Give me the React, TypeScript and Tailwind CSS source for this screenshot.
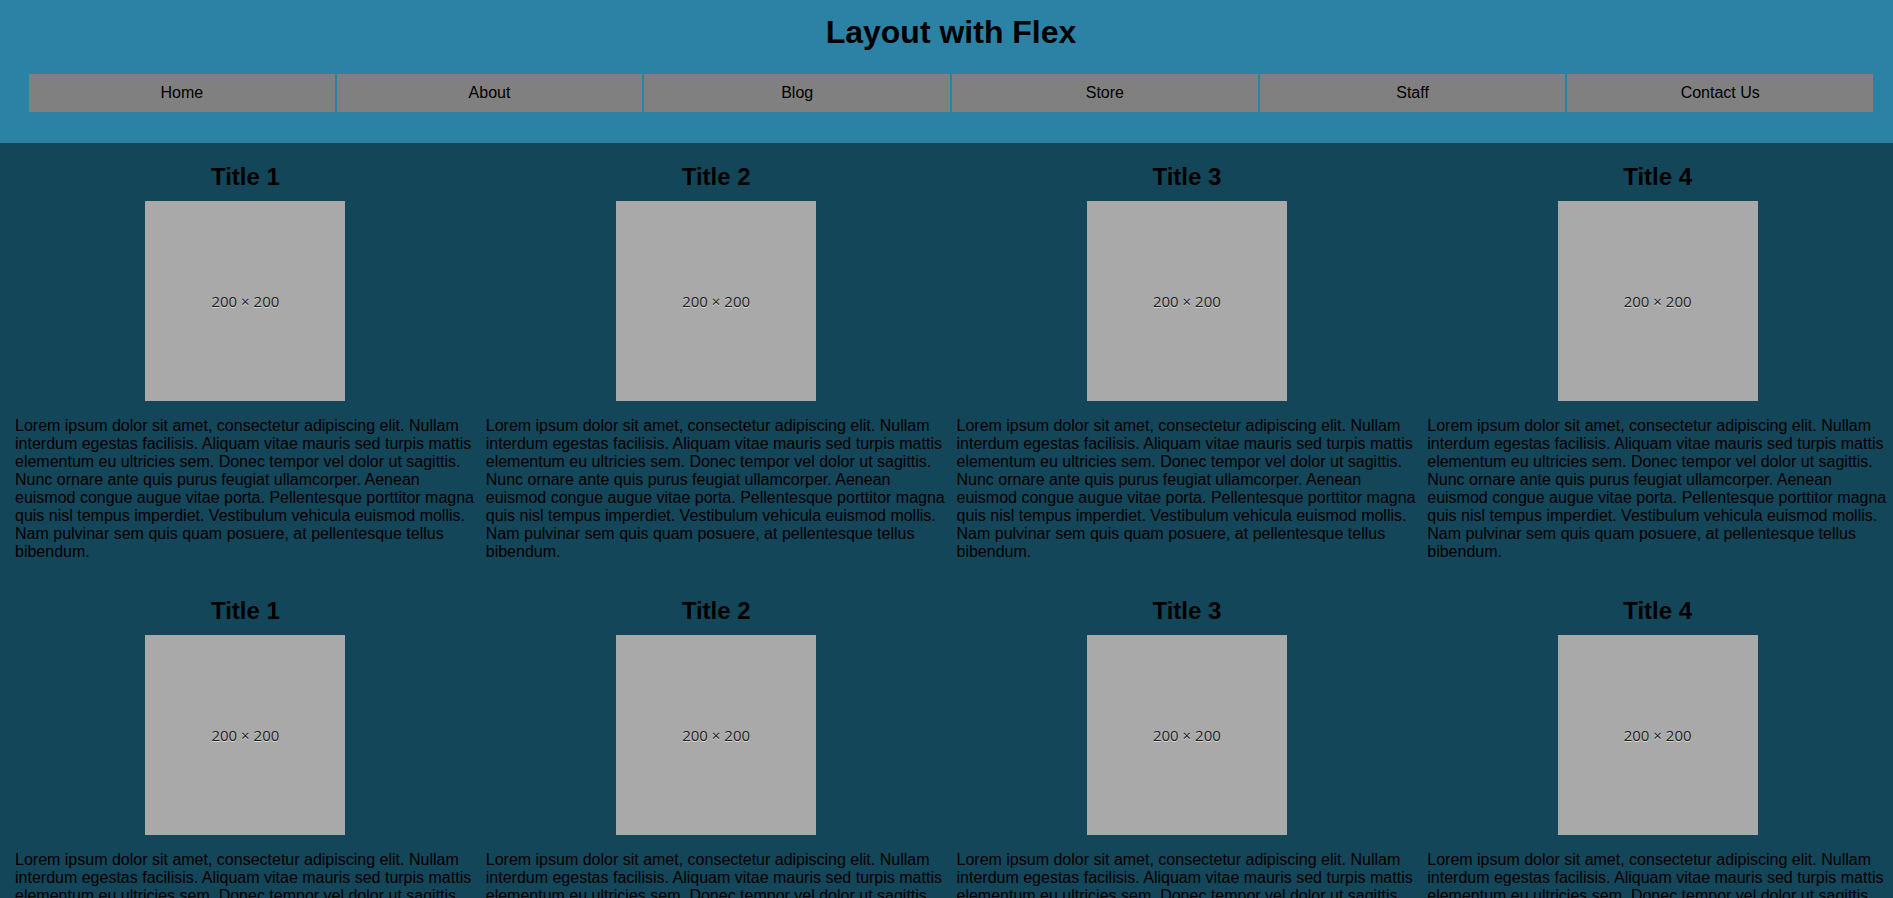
const navItems = ['Home', 'About', 'Blog', 'Store', 'Staff', 'Contact Us'];

const lorem =
  'Lorem ipsum dolor sit amet, consectetur adipiscing elit. Nullam interdum egestas facilisis. Aliquam vitae mauris sed turpis mattis elementum eu ultricies sem. Donec tempor vel dolor ut sagittis. Nunc ornare ante quis purus feugiat ullamcorper. Aenean euismod congue augue vitae porta. Pellentesque porttitor magna quis nisl tempus imperdiet. Vestibulum vehicula euismod mollis. Nam pulvinar sem quis quam posuere, at pellentesque tellus bibendum.';

const cards = [1, 2, 3, 4, 1, 2, 3, 4];

function Placeholder() {
  return (
    <div className="flex h-[200px] w-[200px] items-center justify-center bg-[#a9a9a9]">
      <span className="font-['Open_Sans',sans-serif] text-[15px] text-[#1c1c1c] [text-shadow:0_1px_0_rgba(255,255,255,0.55)]">
        200 × 200
      </span>
    </div>
  );
}

function Card({ n }: { n: number }) {
  return (
    <article className="flex flex-col items-center px-[5px] pt-[20px] pb-[16px]">
      <h2 className="mb-[10.5px] text-[24px] leading-[27.5px] font-bold text-black">Title {n}</h2>
      <Placeholder />
      <p className="mt-[16px] w-full text-[16px] text-black">{lorem}</p>
    </article>
  );
}

export default function App() {
  return (
    <div className="min-h-screen bg-[#14465a] font-['Liberation_Sans',Arial,sans-serif] leading-[normal]">
      <header className="bg-[#2c82a5] pt-[14px] pr-[20px] pb-[31px] pl-[29px]">
        <h1 className="text-center text-[32px] font-bold text-black">Layout with Flex</h1>
        <nav className="mt-[23px]">
          <ul className="flex gap-[2px]">
            {navItems.map((item) => (
              <li key={item} className="flex-1 bg-[#808080] py-[10px] text-center text-[16px] text-black">
                {item}
              </li>
            ))}
          </ul>
        </nav>
      </header>

      <main className="grid grid-cols-4 pl-[10px]">
        {cards.map((n, i) => (
          <Card key={i} n={n} />
        ))}
      </main>
    </div>
  );
}
